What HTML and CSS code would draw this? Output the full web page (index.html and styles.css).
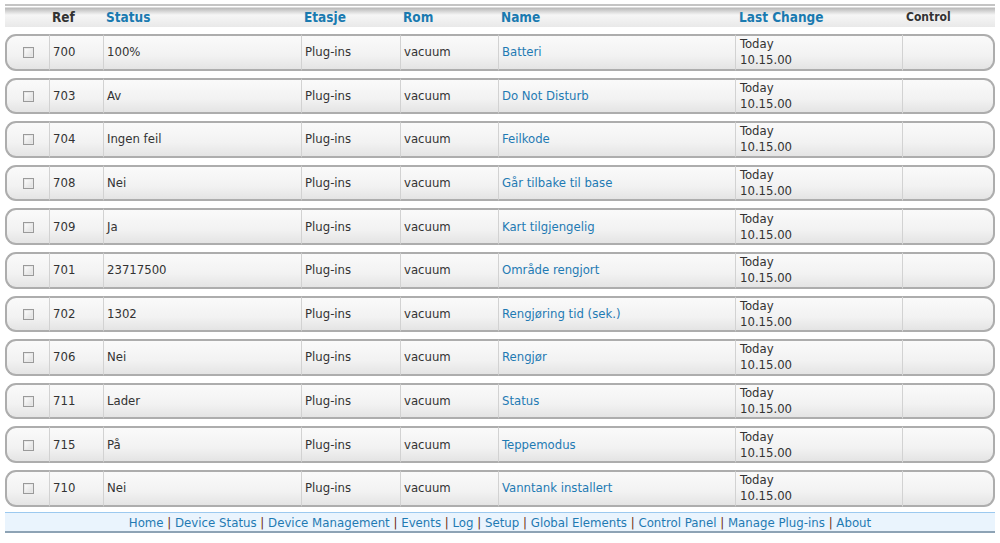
FILE: index.html
```html
<!DOCTYPE html>
<html lang="en">
<head>
    <meta charset="UTF-8">
    <title>Device Status</title>
    <link rel="stylesheet" href="styles.css">
</head>
<body>

    <table class="devices">
        <thead>
            <tr class="head">
                <th class="c-check"></th>
                <th class="c-ref plain">Ref</th>
                <th class="c-status">Status</th>
                <th class="c-floor">Etasje</th>
                <th class="c-room">Rom</th>
                <th class="c-name">Name</th>
                <th class="c-change">Last Change</th>
                <th class="c-control plain small">Control</th>
            </tr>
        </thead>
        <tbody id="rows"></tbody>
    </table>

    <div class="footer">
        <a href="#">Home</a> | <a href="#">Device Status</a> | <a href="#">Device Management</a> | <a href="#">Events</a> | <a href="#">Log</a> | <a href="#">Setup</a> | <a href="#">Global Elements</a> | <a href="#">Control Panel</a> | <a href="#">Manage Plug-ins</a> | <a href="#">About</a>
    </div>

    <script>
        var devices = [
            ["700", "100%", "Batteri"],
            ["703", "Av", "Do Not Disturb"],
            ["704", "Ingen feil", "Feilkode"],
            ["708", "Nei", "Går tilbake til base"],
            ["709", "Ja", "Kart tilgjengelig"],
            ["701", "23717500", "Område rengjort"],
            ["702", "1302", "Rengjøring tid (sek.)"],
            ["706", "Nei", "Rengjør"],
            ["711", "Lader", "Status"],
            ["715", "På", "Teppemodus"],
            ["710", "Nei", "Vanntank installert"]
        ];

        var html = "";
        devices.forEach(function (d) {
            html += "<tr class='row'>" +
                "<td class='c-check'><span class='box'></span></td>" +
                "<td>" + d[0] + "</td>" +
                "<td>" + d[1] + "</td>" +
                "<td>Plug-ins</td>" +
                "<td>vacuum</td>" +
                "<td><a href='#'>" + d[2] + "</a></td>" +
                "<td class='c-change'>Today<br>10.15.00</td>" +
                "<td></td>" +
                "</tr>";
        });
        document.getElementById("rows").innerHTML = html;
    </script>

</body>
</html>
```

FILE: styles.css
```css
body {
    margin: 0;
    padding: 0 5px;
    font-family: "DejaVu Sans Condensed", "DejaVu Sans", sans-serif;
    font-size: 13px;
    color: #333;
    background: #fff;
}

a {
    color: #1f7ab3;
    text-decoration: none;
}

/* Device table */
.devices {
    width: 990px;
    margin-top: -3px;
    border-collapse: separate;
    border-spacing: 0 7px;
}

.head th {
    height: 20px;
    padding: 1px 0 0 3px;
    text-align: left;
    font-weight: bold;
    font-size: 13.5px;
    color: #1a7ab0;
    border-top: 2px solid #c4c4c4;
    background: linear-gradient(to bottom, #fff 0, #fff 1px, #b9b9b9 2px, #f6f6f6 9px, #e9e9e9 100%);
}

.head th.plain {
    color: #333;
}

.head th.small {
    font-size: 12px;
    padding-left: 4px;
}

.c-check { width: 41px; }
.c-ref { width: 51px; }
.c-status { width: 195px; }
.c-floor { width: 96px; }
.c-room { width: 95px; }
.c-name { width: 234px; }
.c-change { width: 162px; }

.head th.c-change {
    padding-left: 4px;
}

/* Each row is a rounded box */
.row td {
    height: 32.6px;
    padding: 0 0 0 3px;
    border-top: 2px solid #adadad;
    border-bottom: 2px solid #adadad;
    border-left: 1px solid #d2d2d2;
    background: linear-gradient(to bottom, #fafafa 0%, #f2f2f2 60%, #e4e4e4 100%);
    line-height: 16px;
}

.row td:first-child {
    border-left: 2px solid #adadad;
    border-radius: 11px 0 0 11px;
    text-align: center;
    padding: 0;
}

.row td:last-child {
    border-right: 2px solid #adadad;
    border-radius: 0 11px 11px 0;
}

.row td.c-change {
    padding-left: 4px;
}

.box {
    display: inline-block;
    width: 9px;
    height: 9px;
    border: 1px solid #9a9a9a;
    background: linear-gradient(to bottom right, #fff, #ddd);
    vertical-align: middle;
    box-shadow: inset 0 0 0 1px #e8e8e8;
}

/* Footer menu */
.footer {
    margin-top: -2px;
    width: 990px;
    height: 18px;
    border-top: 1px solid #9cc9ef;
    border-bottom: 2px solid #8ea3b5;
    background: #eaf4fd;
    text-align: center;
    font-size: 13.1px;
    line-height: 20px;
    color: #6b2a10;
}
```
